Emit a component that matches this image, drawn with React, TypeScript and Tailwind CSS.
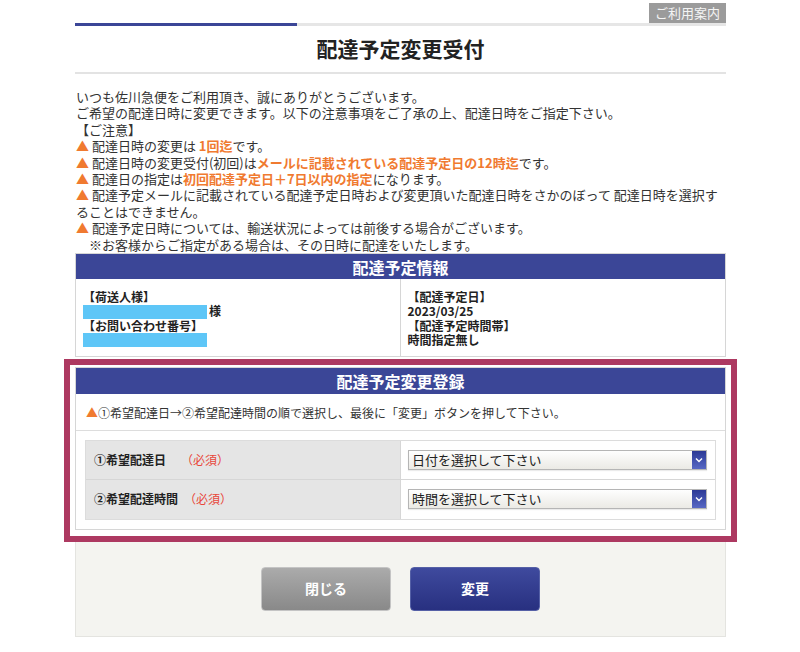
const notes = [
  { text: '配達日時の変更は ', em: '1回迄', rest: 'です。' },
  { text: '配達日時の変更受付(初回)は', em: 'メールに記載されている配達予定日の12時迄', rest: 'です。' },
  { text: '配達日の指定は', em: '初回配達予定日＋7日以内の指定', rest: 'になります。' },
];

const Tri = () => <span className="text-[#f07a30]">▲</span>;

const Select = ({ label }: { label: string }) => (
  <div className="flex h-[20px] flex-1 items-stretch border border-[#b5b5b5] bg-linear-to-b from-[#fefefe] to-[#ebeae5] shadow-[0_1px_1px_rgba(0,0,0,0.08)]">
    <span className="flex flex-1 items-center pl-[3px] text-[13px] font-normal text-[#222]">{label}</span>
    <span className="flex w-[14px] items-center justify-center bg-linear-to-b from-[#2c3996] to-[#5868c4]">
      <svg width="8" height="6" viewBox="0 0 8 6">
        <polyline points="1,1.5 4,4.5 7,1.5" fill="none" stroke="#fff" strokeWidth="1.4" />
      </svg>
    </span>
  </div>
);

export default function App() {
  return (
    <div className="min-h-[652px] bg-white font-['Noto_Sans_CJK_JP',sans-serif] text-[#333]">
      <div className="ml-[75px] w-[651px]">
        <div className="flex justify-end pt-[3px]">
          <span className="h-[20px] bg-[#9b9b9b] px-[6px] text-[13px] leading-[20px] text-[#f4f4f4]">ご利用案内</span>
        </div>
        <div className="flex h-[3px]">
          <div className="w-[222px] bg-[#3b4697]" />
          <div className="flex-1 bg-[#e6e6e6]" />
        </div>
        <h1 className="flex h-[48px] items-center justify-center border-b-2 border-[#e3e3e3] text-[21px] font-bold text-[#222]">
          配達予定変更受付
        </h1>

        {/* intro */}
        <div className="mt-[15px] pl-[1px] text-[13px] leading-[16.4px]">
          <div>いつも佐川急便をご利用頂き、誠にありがとうございます。</div>
          <div>ご希望の配達日時に変更できます。以下の注意事項をご了承の上、配達日時をご指定下さい。</div>
          <div>【ご注意】</div>
          {notes.map((n) => (
            <div key={n.em}>
              <Tri /> {n.text}
              <span className="font-bold text-[#f07a30]">{n.em}</span>
              {n.rest}
            </div>
          ))}
          <div className="whitespace-nowrap">
            <Tri /> 配達予定メールに記載されている配達予定日時および変更頂いた配達日時をさかのぼって 配達日時を選択す
          </div>
          <div>ることはできません。</div>
          <div>
            <Tri /> 配達予定日時については、輸送状況によっては前後する場合がございます。
          </div>
          <div className="pl-[13px]">※お客様からご指定がある場合は、その日時に配達をいたします。</div>
        </div>

        {/* info */}
        <div className="border border-[#d6d6d6]">
          <div className="flex h-[25px] items-center justify-center bg-[#3b4697] text-[16px] font-bold text-white">
            配達予定情報
          </div>
          <div className="grid grid-cols-2 text-[12px] font-bold leading-[14.4px] text-[#222]">
            <div className="border-r border-[#d6d6d6] pt-[11px] pb-[8px] pl-[7px]">
              <div>【荷送人様】</div>
              <div className="flex items-center">
                <span className="h-[14px] w-[124px] bg-[#5ec6f7]" />
                <span className="ml-[2px]">様</span>
              </div>
              <div>【お問い合わせ番号】</div>
              <div className="flex h-[14.4px] items-center">
                <span className="h-[14px] w-[124px] bg-[#5ec6f7]" />
              </div>
            </div>
            <div className="pt-[11px] pb-[8px] pl-[7px]">
              <div>【配達予定日】</div>
              <div>2023/03/25</div>
              <div>【配達予定時間帯】</div>
              <div>時間指定無し</div>
            </div>
          </div>
        </div>

        {/* change form */}
        <div className="-mx-[11px] mt-[2px] border-[6px] border-[#ad3961] px-[5px] pt-[2px] pb-[6px]">
          <div className="border border-[#d6d6d6] bg-white">
            <div className="flex h-[26px] items-center justify-center bg-[#3b4697] text-[16px] font-bold text-white">
              配達予定変更登録
            </div>
            <div className="border-b border-[#dddddd] pt-[10px] pb-[8px] pl-[10px] text-[12px] leading-[18px]">
              <Tri />①希望配達日→②希望配達時間の順で選択し、最後に「変更」ボタンを押して下さい。
            </div>
            <div className="p-[9px]">
              <div className="border border-[#dcdcdc] text-[12px] font-bold text-[#222]">
                <div className="grid h-[39px] grid-cols-[315px_1fr] border-b border-[#d6d6d6]">
                  <div className="flex items-center border-r border-[#d6d6d6] bg-[#e5e5e5] pl-[8px]">
                    ①希望配達日<span className="ml-[15px] font-normal text-[#e8473a]">（必須）</span>
                  </div>
                  <div className="flex items-center pr-[8px] pl-[7px]">
                    <Select label="日付を選択して下さい" />
                  </div>
                </div>
                <div className="grid h-[39px] grid-cols-[315px_1fr]">
                  <div className="flex items-center border-r border-[#d6d6d6] bg-[#e5e5e5] pl-[8px]">
                    ②希望配達時間<span className="ml-[6px] font-normal text-[#e8473a]">（必須）</span>
                  </div>
                  <div className="flex items-center pr-[8px] pl-[7px]">
                    <Select label="時間を選択して下さい" />
                  </div>
                </div>
              </div>
            </div>
          </div>
        </div>

        {/* buttons */}
        <div className="flex justify-center gap-[19px] border border-t-0 border-[#e4e4e0] bg-[#f4f4f0] py-[25px]">
          <button className="h-[44px] w-[130px] rounded-[4px] border border-[#c4c4c4] bg-linear-to-b from-[#ababab] to-[#898989] text-[14px] font-bold text-white">
            閉じる
          </button>
          <button className="h-[44px] w-[130px] rounded-[4px] border border-[#5560a6] bg-linear-to-b from-[#3f4a9e] to-[#283080] text-[14px] font-bold text-white">
            変更
          </button>
        </div>
      </div>
    </div>
  );
}
